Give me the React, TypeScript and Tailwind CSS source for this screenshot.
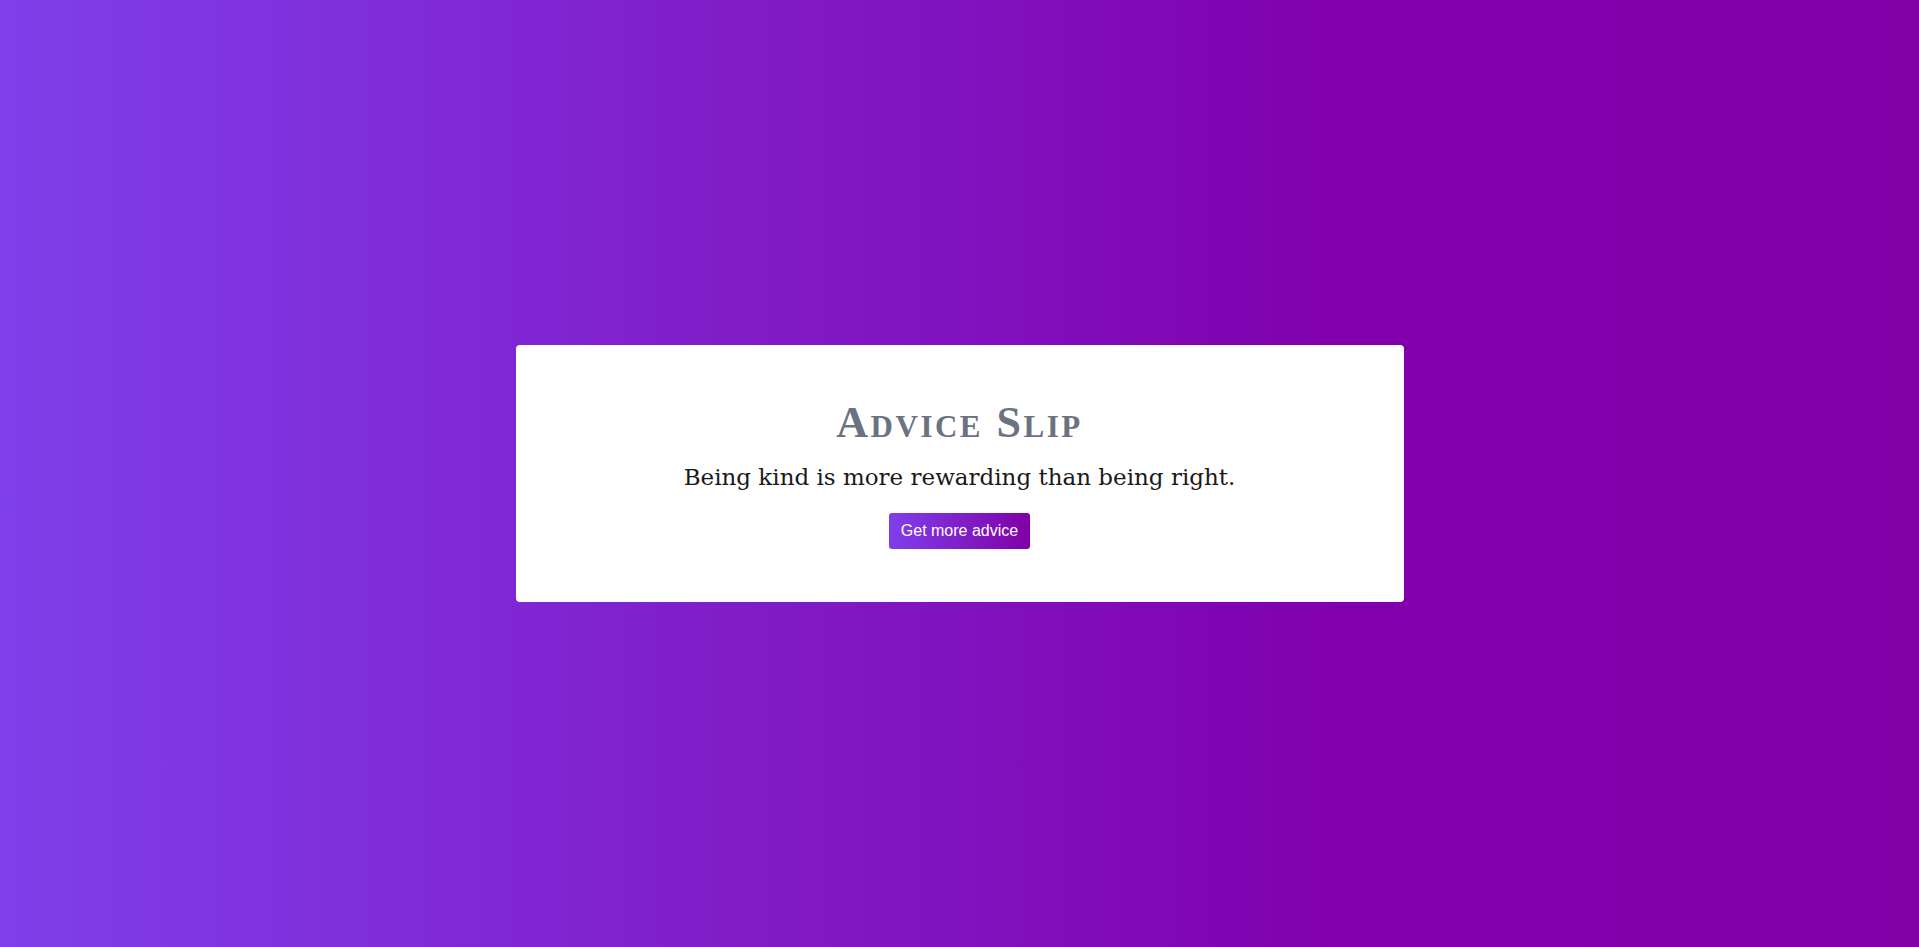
export default function App() {
  return (
    <div className="flex h-[947px] w-full items-center justify-center bg-[linear-gradient(to_right,#7f3fea,#8100ad_70%,#8200a8)]">
      <div className="flex h-[257px] w-[888px] flex-col items-center rounded-[4px] bg-white pt-[54px]">
        <h1 className="font-['Liberation_Serif',serif] text-[44px] leading-[48px] font-bold tracking-[2.5px] text-[#6b7280] [font-variant:small-caps]">
          Advice Slip
        </h1>
        <p className="mt-[14px] font-['DejaVu_Serif',serif] text-[23px] leading-[32px] text-[#1a1a1a]">
          Being kind is more rewarding than being right.
        </p>
        <button className="mt-[20px] h-[36px] rounded-[3px] bg-[linear-gradient(to_right,#7f3fea,#8000a8)] px-[12px] font-['Liberation_Sans',sans-serif] text-[16px] text-white">
          Get more advice
        </button>
      </div>
    </div>
  );
}
